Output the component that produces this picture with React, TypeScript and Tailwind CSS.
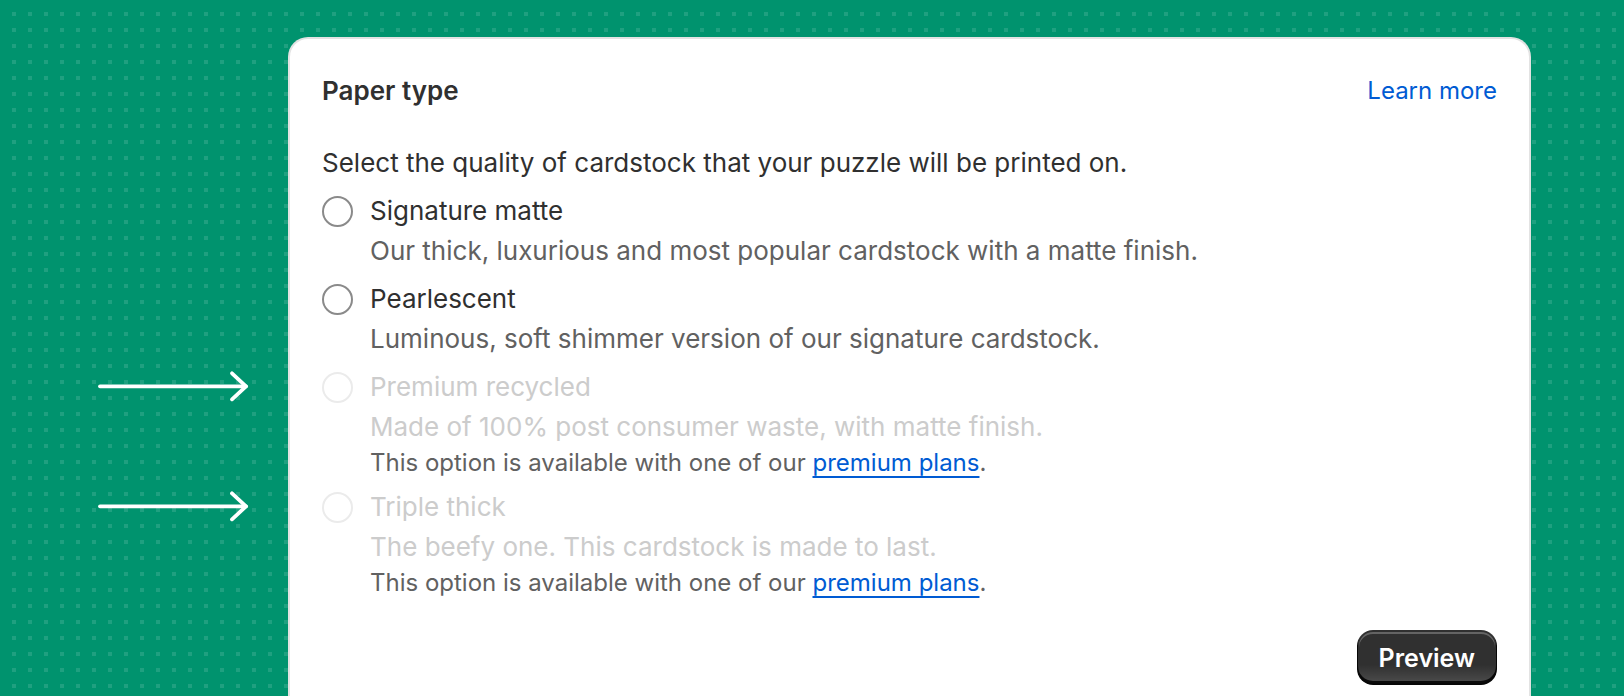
import type { ReactNode } from 'react'

type Option = {
  title: string
  description: string
  disabled?: boolean
}

const options: Option[] = [
  { title: 'Signature matte', description: 'Our thick, luxurious and most popular cardstock with a matte finish.' },
  { title: 'Pearlescent', description: 'Luminous, soft shimmer version of our signature cardstock.' },
  { title: 'Premium recycled', description: 'Made of 100% post consumer waste, with matte finish.', disabled: true },
  { title: 'Triple thick', description: 'The beefy one. This cardstock is made to last.', disabled: true },
]

function Arrow() {
  return (
    <svg
      className="absolute right-full top-1/2 mr-[72px] -translate-y-[52%]"
      width="152"
      height="32"
      viewBox="0 0 152 32"
      fill="none"
      stroke="white"
      strokeWidth="3.8"
      strokeLinecap="round"
      strokeLinejoin="round"
    >
      <path d="M2 16H148" />
      <path d="M134 3L148 16L134 29" />
    </svg>
  )
}

function Radio({ disabled }: { disabled?: boolean }) {
  return (
    <span
      className={
        disabled
          ? 'h-[31px] w-[31px] shrink-0 rounded-full border-2 border-[#ebebeb] bg-white'
          : 'h-[31px] w-[31px] shrink-0 rounded-full border-2 border-[#8a8a8a] bg-white'
      }
    />
  )
}

function PremiumNote() {
  return (
    <p className="pl-[48px] text-[24px] leading-[32px] text-[#616161]">
      This option is available with one of our{' '}
      <a className="text-[#005bd3] underline decoration-2 underline-offset-[5px]" href="#">
        premium plans
      </a>
      .
    </p>
  )
}

function OptionRow({ option }: { option: Option }) {
  return (
    <div className="flex flex-col">
      <label className="relative flex h-[40px] items-center gap-[17px]">
        {option.disabled && <Arrow />}
        <Radio disabled={option.disabled} />
        <span className={option.disabled ? 'text-[#cccccc]' : 'text-[#303030]'}>{option.title}</span>
      </label>
      <p className={option.disabled ? 'pl-[48px] text-[#cccccc]' : 'pl-[48px] text-[#616161]'}>
        {option.description}
      </p>
      {option.disabled && <PremiumNote />}
    </div>
  )
}

function Card({ children }: { children: ReactNode }) {
  return (
    <section className="ml-[288px] mt-[37px] h-[700px] w-[1243px] rounded-t-[20px] border-2 border-b-0 border-[#e3e3e3] bg-white px-[32px] pt-[32px]">
      {children}
    </section>
  )
}

export default function App() {
  return (
    <div
      className="h-[696px] w-full overflow-hidden bg-[#00936e] bg-[image:conic-gradient(from_90deg_at_4px_4px,transparent_180deg,rgba(255,255,255,0.12)_180deg_270deg,transparent_270deg)] bg-[size:16px_16px] bg-[position:12px_12px] text-[26px] leading-[40px]"
      style={{ fontFamily: 'Inter, "Noto Sans", sans-serif' }}
    >
      <Card>
        <header className="flex h-[40px] items-center justify-between">
          <h2 className="font-semibold text-[#303030]">Paper type</h2>
          <a className="text-[24px] text-[#005bd3]" href="#">
            Learn more
          </a>
        </header>

        <p className="mt-[32px] text-[#303030]">
          Select the quality of cardstock that your puzzle will be printed on.
        </p>

        <div className="mt-[8px] flex flex-col gap-[8px]">
          {options.map((o) => (
            <OptionRow key={o.title} option={o} />
          ))}
        </div>

        <div className="mt-[31px] flex justify-end">
          <button className="h-[55px] rounded-[16px] bg-[#303030] bg-[linear-gradient(180deg,rgba(48,48,48,0)_63%,rgba(255,255,255,0.15)_100%)] px-[22px] text-[25px] font-semibold text-white shadow-[inset_0_-3px_0_1px_rgba(0,0,0,0.85),inset_0_0_0_2px_#303030,inset_0_2px_0_2px_rgba(255,255,255,0.25)]">
            Preview
          </button>
        </div>
      </Card>
    </div>
  )
}
